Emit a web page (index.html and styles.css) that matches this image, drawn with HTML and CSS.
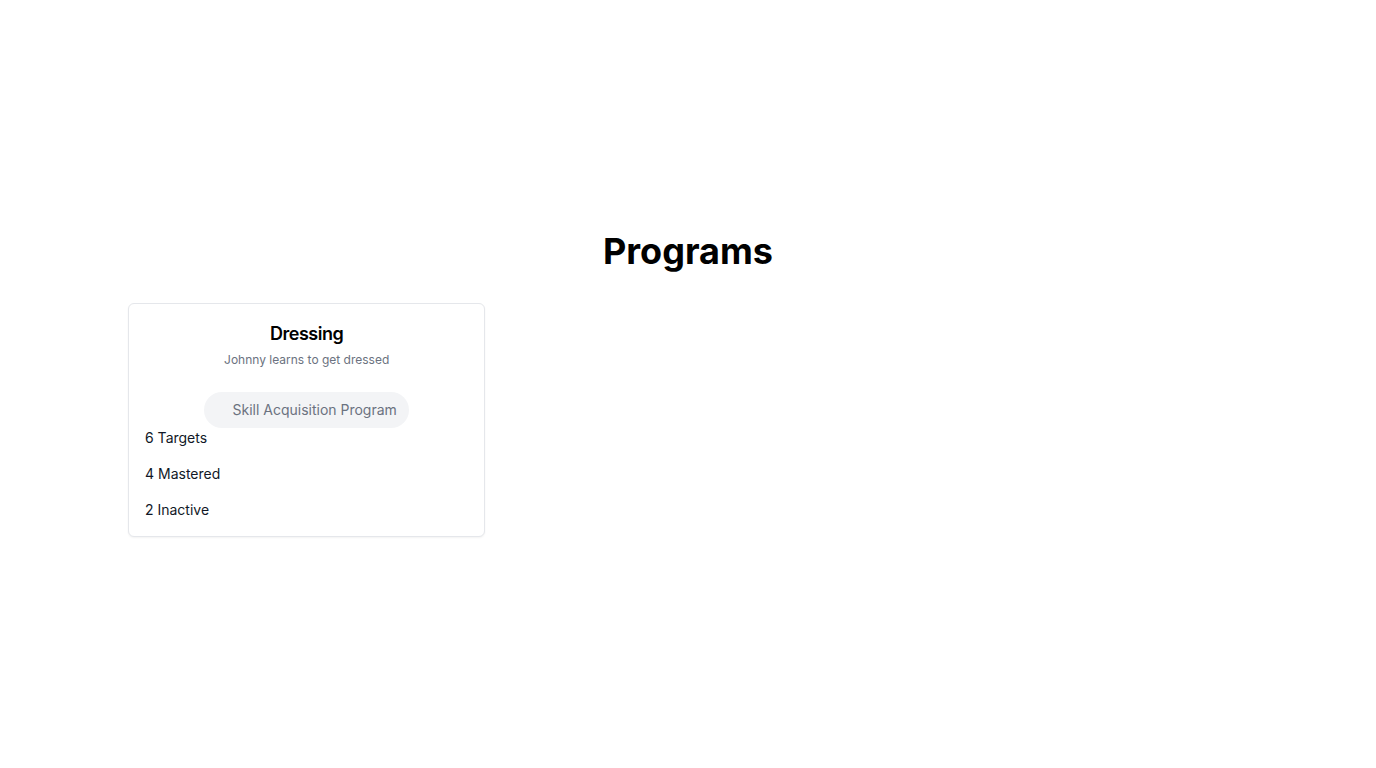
FILE: index.html
```html
<!DOCTYPE html>
<html lang="en">
<head>
<meta charset="utf-8">
<title>Programs</title>
<link rel="stylesheet" href="styles.css">
</head>
<body>
<main class="page">
  <div class="container">
    <h1 class="title">Programs</h1>
    <div class="grid">
      <div class="card">
        <h2 class="card-title">Dressing</h2>
        <p class="card-sub">Johnny learns to get dressed</p>
        <div class="pill-row"><span class="pill">Skill Acquisition Program</span></div>
        <ul class="stats">
          <li>6 Targets</li>
          <li>4 Mastered</li>
          <li>2 Inactive</li>
        </ul>
      </div>
    </div>
  </div>
</main>
</body>
</html>
```
FILE: styles.css
```css
* { box-sizing: border-box; }
html, body { margin: 0; padding: 0; background: #fff; }
body { font-family: Inter, "Noto Sans", sans-serif; color: #111827; }
.page {
  min-height: 100vh;
  display: flex;
  align-items: center;
  justify-content: center;
}
.container { width: 1120px; }
.title {
  margin: 0 0 32px;
  text-align: center;
  font-size: 36px;
  line-height: 40px;
  font-weight: 700;
  color: #000;
}
.grid {
  display: grid;
  grid-template-columns: repeat(3, 1fr);
  gap: 24px;
}
.card {
  border: 1px solid #e5e7eb;
  border-radius: 6px;
  box-shadow: 0 1px 2px rgba(0,0,0,0.05);
  padding: 16px;
  background: #fff;
}
.card-title {
  margin: 0;
  text-align: center;
  font-size: 18px;
  line-height: 28px;
  font-weight: 600;
  letter-spacing: -0.025em;
  color: #000;
}
.card-sub {
  margin: 4px 0 0;
  text-align: center;
  font-size: 12px;
  line-height: 16px;
  color: #6b7280;
}
.pill-row {
  margin-top: 24px;
  display: flex;
  justify-content: center;
}
.pill {
  background: #f3f4f6;
  color: #6b7280;
  border-radius: 9999px;
  padding: 8px 12px 8px 28px;
  font-size: 14px;
  line-height: 20px;
}
.stats {
  list-style: none;
  margin: 0;
  padding: 0;
  display: flex;
  flex-direction: column;
  gap: 16px;
  font-size: 14px;
  line-height: 20px;
  color: #111827;
}
```
